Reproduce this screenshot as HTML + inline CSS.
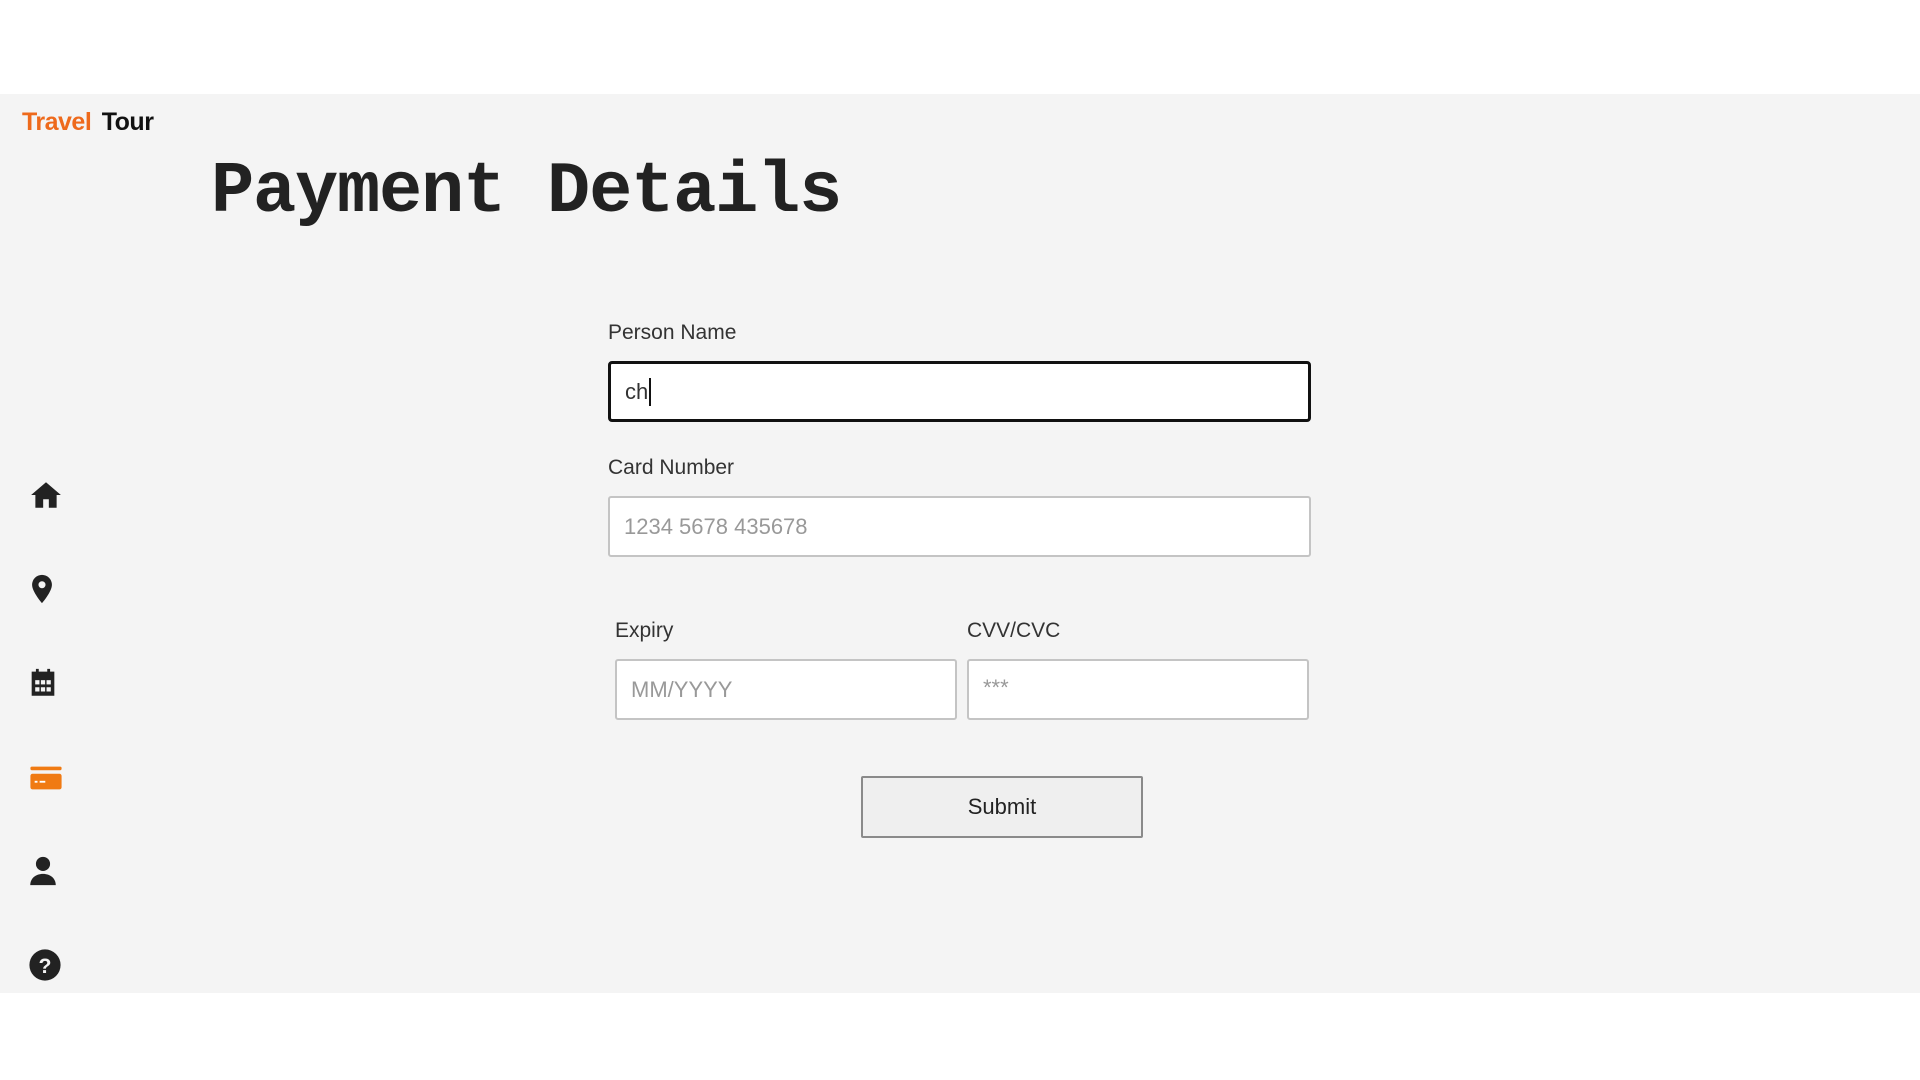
<!DOCTYPE html>
<html><head><meta charset="utf-8"><style>
*{box-sizing:border-box;margin:0;padding:0}
body{width:1920px;height:1080px;background:#fff;position:relative;overflow:hidden;font-family:"Liberation Sans",sans-serif}
.band{position:absolute;left:0;top:94px;width:1920px;height:899px;background:#f4f4f4}
.logo{position:absolute;left:22px;top:108px;font-size:25px;font-weight:bold;letter-spacing:-0.5px;word-spacing:4px}
.logo .o{color:#ee6a1c}.logo .b{color:#111}
h1{position:absolute;left:211px;top:151px;font-family:"Liberation Mono",monospace;font-weight:bold;font-size:72px;letter-spacing:-1.2px;color:#222}
.lbl{position:absolute;font-size:21px;color:#333}
.inp{position:absolute;background:#fff;border:2px solid #c4c4c4;border-radius:3px;font-size:22px;color:#999;padding-left:14px;display:flex;align-items:center}
.icon{position:absolute;width:34px;height:34px}
</style></head><body>
<div class="band"></div>
<div class="logo"><span class="o">Travel</span> <span class="b">Tour</span></div>
<h1>Payment Details</h1>

<div class="lbl" style="left:608px;top:321px">Person Name</div>
<div class="inp" style="left:608px;top:361px;width:703px;height:61px;border:3px solid #111;border-radius:4px;color:#333">ch<span style="display:inline-block;width:2px;height:28px;background:#111;margin-left:1px"></span></div>

<div class="lbl" style="left:608px;top:456px">Card Number</div>
<div class="inp" style="left:608px;top:496px;width:703px;height:61px">1234 5678 435678</div>

<div class="lbl" style="left:615px;top:619px">Expiry</div>
<div class="inp" style="left:615px;top:659px;width:342px;height:61px">MM/YYYY</div>

<div class="lbl" style="left:967px;top:619px">CVV/CVC</div>
<div class="inp" style="left:967px;top:659px;width:342px;height:61px;align-items:flex-start;padding-top:14px">***</div>

<div style="position:absolute;left:861px;top:776px;width:282px;height:62px;background:#efefef;border:2px solid #8a8a8a;border-radius:2px;display:flex;align-items:center;justify-content:center;font-size:22px;color:#222">Submit</div>

<svg class="icon" style="left:29px;top:478px" viewBox="0 0 24 24"><path fill="#222" d="M12 3L1.5 12h3v9h5.5v-6h4v6h5.5v-9h3z"/></svg>
<svg class="icon" style="left:25px;top:572px" viewBox="0 0 24 24"><path fill="#222" d="M12 2a7 7 0 0 0-7 7c0 5 7 13 7 13s7-8 7-13a7 7 0 0 0-7-7zm0 9.5a2.5 2.5 0 1 1 0-5 2.5 2.5 0 0 1 0 5z"/></svg>
<svg class="icon" style="left:26px;top:666px" viewBox="0 0 24 24"><path fill="#222" d="M7 2h2v2h6V2h2v2h3v17H4V4h3z"/><g fill="#f4f4f4"><rect x="6.5" y="10" width="3" height="3"/><rect x="10.5" y="10" width="3" height="3"/><rect x="14.5" y="10" width="3" height="3"/><rect x="6.5" y="15" width="3" height="3"/><rect x="10.5" y="15" width="3" height="3"/><rect x="14.5" y="15" width="3" height="3"/></g></svg>
<svg class="icon" style="left:29px;top:761px" viewBox="0 0 24 24"><rect x="1" y="4" width="22" height="2.5" rx="1" fill="#f07a12"/><rect x="1" y="9" width="22" height="11" rx="1.5" fill="#f07a12"/><rect x="4" y="14" width="2" height="1.3" fill="#fff"/><rect x="7.5" y="14" width="4" height="1.3" fill="#fff"/></svg>
<svg class="icon" style="left:26px;top:854px" viewBox="0 0 24 24"><circle cx="12" cy="7" r="5" fill="#222"/><path fill="#222" d="M3 22c0-5 4-8 9-8s9 3 9 8z"/></svg>
<svg class="icon" style="left:28px;top:948px" viewBox="0 0 24 24"><circle cx="12" cy="12" r="11" fill="#222"/><text x="12" y="17.5" text-anchor="middle" font-family="Liberation Sans" font-weight="bold" font-size="15" fill="#f4f4f4">?</text></svg>
</body></html>
